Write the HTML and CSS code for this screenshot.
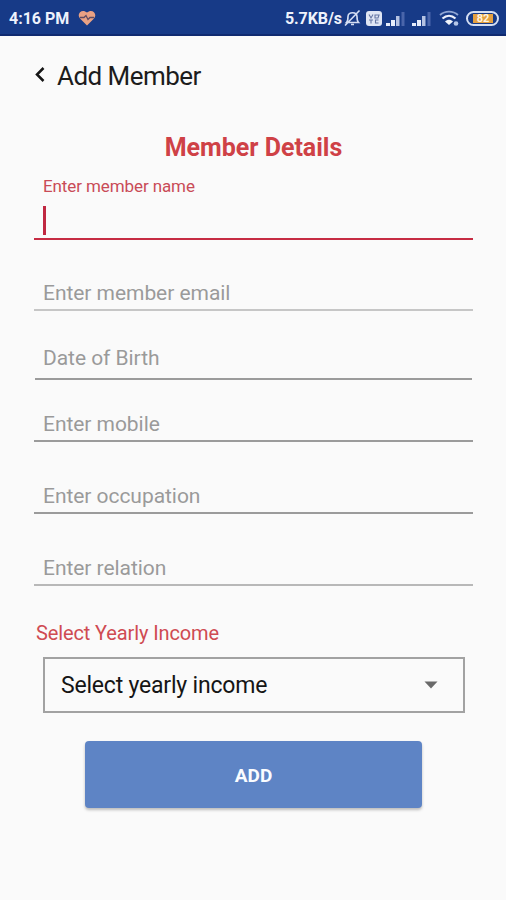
FILE: index.html
```html
<!DOCTYPE html>
<html lang="en">

<head>
    <meta charset="UTF-8">
    <meta name="viewport" content="width=device-width, initial-scale=1.0">
    <title>Add Member</title>
    <link rel="stylesheet" href="styles.css">
</head>

<body>
    <div class="status-bar">
        <span class="clock">4:16 PM</span>
        <svg class="heart" width="18" height="16" viewBox="0 0 18 16">
            <path d="M9 15.5L2 8.6C-2 4 4-2 9 2.6C14-2 20 4 16 8.6Z" fill="#e9a184"/>
            <path d="M2 7.500h4l2-2 2 4 2-2h4" fill="none" stroke="#5d4b62" stroke-width="1.300"/>
        </svg>
        <span class="speed">5.7KB/s</span>
        <svg class="bell" width="17" height="18" viewBox="0 0 17 18">
            <path d="M2.500 13.500h12c-1.500-1.500-1.500-3-1.500-6 0-5-9-5-9 0 0 3 0 4.500-1.500 6zM7 15.500h3M15.500 1.500L1 16.500" fill="none" stroke="#d5def3" stroke-width="1.600"/>
        </svg>
        <svg class="volte" width="16" height="15" viewBox="0 0 16 15">
            <rect width="16" height="15" rx="3" fill="#dfe5f4"/>
            <path d="M3 3.500l2 3.500 2-3.500M9 4h4l-1 3H9zM3 9h4M5 9v3.500M12.500 9H9.500v3h3" fill="none" stroke="#6576a3" stroke-width="1.100"/>
        </svg>
        <svg class="signal" width="19" height="15" viewBox="0 0 19 15">
            <path d="M0 12h4v3H0zM5 9h4v6H5z" fill="#e6ecfa"/>
            <path d="M10 5h3.500v10H10z" fill="#b5c2e2"/>
            <path d="M15.500 1h3v14h-3z" fill="#4a65aa"/>
        </svg>
        <svg class="signal second" width="19" height="15" viewBox="0 0 19 15">
            <path d="M0 12h4v3H0zM5 9h4v6H5z" fill="#e6ecfa"/>
            <path d="M10 5h3.500v10H10z" fill="#b5c2e2"/>
            <path d="M15.500 1h3v14h-3z" fill="#4a65aa"/>
        </svg>
        <svg class="wifi" width="20" height="16" viewBox="0 0 20 16">
            <path d="M1 5c5-4.500 13-4.500 18 0" fill="none" stroke="#8fa5d3" stroke-width="1.800"/>
            <path d="M3.500 8.500c4-3.700 9-3.700 13 0" fill="none" stroke="#eef2fc" stroke-width="2.200"/>
            <path d="M6 11.500c2.500-2.200 5.500-2.200 8 0l-4 3.500z" fill="#f0f4fc"/>
            <circle cx="17" cy="13.500" r="2.300" fill="#b5c6e8"/>
        </svg>
        <div class="battery"><span class="level">82</span></div>
    </div>

    <div class="header">
        <svg class="back" width="12" height="18" viewBox="0 0 12 18">
            <path d="M10.500 1L4 7.500l6.500 6.500" fill="none" stroke="#151515" stroke-width="2.500"/>
        </svg>
        <span class="page-title">Add Member</span>
    </div>

    <div class="form">
        <h1>Member Details</h1>

        <div class="field active">
            <label>Enter member name</label>
            <span class="cursor"></span>
        </div>
        <div class="field email">Enter member email</div>
        <div class="field birth">Date of Birth</div>
        <div class="field mobile">Enter mobile</div>
        <div class="field occupation">Enter occupation</div>
        <div class="field relation">Enter relation</div>

        <div class="income-label">Select Yearly Income</div>
        <div class="select">
            <span>Select yearly income</span>
            <svg width="14" height="8" viewBox="0 0 14 8">
                <path d="M0.500 0.500h13L7 7.500z" fill="#696969"/>
            </svg>
        </div>

        <button class="add-button" type="button">ADD</button>
    </div>
</body>

</html>
```
FILE: styles.css
```css
* {
    box-sizing: border-box;
}

body {
    margin: 0;
    height: 900px;
    background-color: #fafafa;
    font-family: Roboto, sans-serif;
    overflow: hidden;
}

/* Status bar */
.status-bar {
    display: flex;
    align-items: center;
    height: 36px;
    padding: 2px 7px 0 9px;
    background-color: #173a87;
    border-bottom: 2px solid #102a70;
    color: #eef2fc;
    font-size: 16px;
    font-weight: 700;
    line-height: 20px;
    white-space: nowrap;
}

.status-bar svg {
    flex: none;
}

.clock,
.speed {
    padding-top: 1px;
}

.clock {
    width: 60px;
}

.heart {
    margin-left: 9px;
}

.speed {
    width: 56px;
    margin-left: auto;
    letter-spacing: -0.1px;
}

.bell {
    margin-left: 3px;
}

.volte {
    margin-left: 5px;
}

.signal {
    margin-left: 4px;
}

.signal.second {
    margin-left: 7px;
}

.wifi {
    margin-left: 8px;
}

.battery {
    display: flex;
    width: 33px;
    height: 15px;
    margin-left: 7px;
    padding: 1px 4px 1px 5px;
    border: 2px solid #d5def3;
    border-radius: 8px;
}

.level {
    width: 100%;
    background-color: #e5a040;
    color: #fff3df;
    font-size: 11px;
    line-height: 9px;
    text-align: center;
}

/* Header */
.header {
    display: flex;
    align-items: center;
    height: 80px;
    padding-left: 33px;
}

.page-title {
    margin-left: 12px;
    color: #1c1c1c;
    font-size: 26px;
    letter-spacing: -0.55px;
}

/* Form */
.form {
    padding: 0 33px 0 34px;
}

h1 {
    margin: 0;
    padding-top: 17px;
    color: #cf4146;
    font-size: 25px;
    font-weight: 700;
    line-height: 30px;
    text-align: center;
}

.field {
    display: flex;
    align-items: flex-end;
    padding: 0 9px 3px;
    border-bottom: 2px solid #9b9b9b;
    color: #9a9a9a;
    font-size: 21px;
    line-height: 26px;
    letter-spacing: -0.05px;
}

.active {
    flex-direction: column;
    align-items: flex-start;
    height: 77px;
    padding-top: 13px;
    border-color: #c62c43;
}

.active label {
    color: #c94b57;
    font-size: 17px;
    line-height: 20px;
    letter-spacing: -0.1px;
}

.cursor {
    width: 3px;
    height: 29px;
    margin-top: 10px;
    background-color: #c02841;
}

.email {
    height: 71px;
    border-color: #c6c6c6;
}

.birth {
    height: 69px;
    margin: 0 1px;
    padding: 0 8px 7px;
}

.mobile {
    height: 62px;
}

.occupation {
    height: 72px;
}

.relation {
    height: 72px;
    border-color: #b8b8b8;
}

.income-label {
    margin: 34px 0 0 2px;
    color: #cf4b52;
    font-size: 20px;
    line-height: 26px;
    letter-spacing: -0.12px;
}

.select {
    display: flex;
    align-items: center;
    justify-content: space-between;
    height: 56px;
    margin: 11px 8px 0 9px;
    padding: 0 25px 0 16px;
    border: 2px solid #a2a2a2;
    color: #151515;
    font-size: 23px;
    letter-spacing: -0.2px;
}

.add-button {
    display: block;
    width: 337px;
    height: 67px;
    margin: 28px 0 0 51px;
    padding: 2px 0 0;
    border: 0;
    border-radius: 4px;
    background-color: #5e84c5;
    box-shadow: 0 2px 3px rgba(0, 0, 0, 0.25);
    color: #fafcff;
    font-family: inherit;
    font-size: 19px;
    font-weight: 700;
}
```
